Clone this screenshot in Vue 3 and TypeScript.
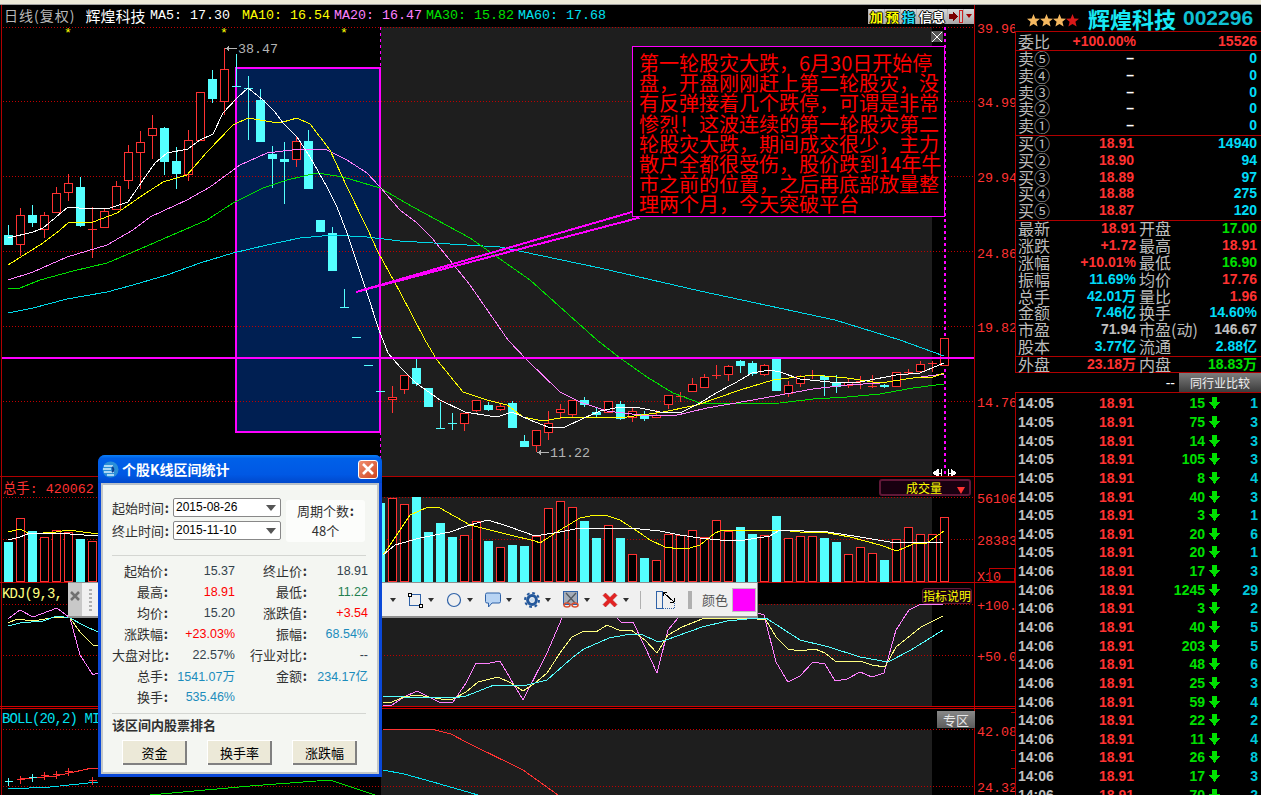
<template>
	<div class="page">
		<div class="top-strip"></div>
		<div class="main">
			<div class="chart">
				<!-- K line pane -->
				<section class="pane pane-k">
					<svg class="plot" viewBox="0 5 1015 471" shape-rendering="crispEdges">
						<rect x="381" y="27" width="551" height="449" fill="#1e1e1e" />
						<rect x="236" y="68" width="144" height="364" fill="#001f52" />
						<line v-for="y in kGrid" :key="y" class="dots" x1="3" x2="974" :y1="y + 0.5" :y2="y + 0.5" />
						<line class="edge" x1="1.5" x2="1.5" y1="5" y2="476" />
						<line class="edge" x1="974.5" x2="974.5" y1="5" y2="476" />
						<rect x="236" y="68" width="144" height="364" fill="none" stroke="#ff00ff" stroke-width="2" />
						<line class="dash-v" x1="380.5" x2="380.5" y1="27" y2="68" />
						<line class="dash-v" x1="380.5" x2="380.5" y1="432" y2="475" />
						<line class="dash-v heavy" x1="945" x2="945" y1="27" y2="475" />
						<g v-for="c in candles" :key="c.x">
							<line :x1="c.x" :x2="c.x" :y1="c.hi" :y2="c.lo" :stroke="c.color" />
							<line v-if="c.flat" :x1="c.x - 4.5" :x2="c.x + 4.5" :y1="c.top + 0.5" :y2="c.top + 0.5" :stroke="c.color" />
							<rect v-else-if="c.up" :x="c.x - 4" :y="c.top + 0.5" width="8" :height="c.bot - c.top" fill="#000" :stroke="c.color" />
							<rect v-else :x="c.x - 4.5" :y="c.top" width="9" :height="c.bot - c.top" :fill="c.color" />
						</g>
						<polyline v-for="l in maLines" :key="l.color" :points="l.points" :stroke="l.color" fill="none" />
						<line x1="2" x2="974" y1="358" y2="358" stroke="#ff00ff" stroke-width="2" />
						<polygon points="356,292 632,212 638,218" fill="none" stroke="#ff00ff" stroke-width="2" />
						<text v-for="x in starXs" :key="x" class="star-mark" :x="x" y="37">*</text>
						<g class="price-flag">
							<line x1="225" x2="237" y1="48.5" y2="48.5" />
							<polygon points="225,48.5 229,46 229,51" />
							<text x="238" y="53">38.47</text>
							<line x1="537" x2="549" y1="452.5" y2="452.5" />
							<polygon points="537,452.5 541,450 541,455" />
							<text x="550" y="457">11.22</text>
						</g>
						<g fill="#fff" stroke="#fff">
							<polygon points="933,473 938,469.5 938,476.5" />
							<line x1="938" x2="941" y1="473" y2="473" />
							<line x1="941.5" x2="941.5" y1="469" y2="477" />
							<polygon points="956,473 951,469.5 951,476.5" />
							<line x1="948" x2="951" y1="473" y2="473" />
							<line x1="948.5" x2="948.5" y1="469" y2="477" />
						</g>
						<text v-for="a in kAxis" :key="a.t" class="axis-text" x="977" :y="a.y + 5">{{ a.t }}</text>
					</svg>
					<header class="pane-head head-k">
						<div class="stock-name">
							<span class="period">日线(复权)</span>
							<span class="name">辉煌科技</span>
						</div>
						<span v-for="m in maLabels" :key="m.t" class="ma-label" :style="{ color: m.color }">{{ m.t }}</span>
						<div class="head-btns">
							<span class="hb yellow">加</span>
							<span class="hb yellow">预</span>
							<span class="hb blue">指</span>
							<span class="hb white wide">信息</span>
							<span class="hb">
								<svg width="14" height="13" viewBox="0 0 14 13" shape-rendering="crispEdges">
									<path d="M0 4h4V1l5 5.5L4 12V9H0z" fill="#7a0000" />
									<rect x="10" y="0.5" width="3" height="12" fill="#c8c8c8" stroke="#d02020" />
								</svg>
							</span>
							<span class="hb narrow"><i class="caret-red"></i></span>
						</div>
					</header>
					<button class="note-close">
						<svg width="10" height="10" viewBox="0 0 10 10"><path d="M0 0l10 10M10 0L0 10" stroke="#fff" stroke-width="1" /></svg>
					</button>
					<div class="note">
						<div v-for="l in noteLines" :key="l">{{ l }}</div>
					</div>
				</section>

				<!-- volume pane -->
				<section class="pane pane-vol">
					<svg class="plot" viewBox="0 476 1015 107" shape-rendering="crispEdges">
						<rect x="381" y="497" width="551" height="86" fill="#1e1e1e" />
						<line v-for="y in [497, 539]" :key="y" class="dots" x1="3" x2="974" :y1="y + 0.5" :y2="y + 0.5" />
						<line class="edge" x1="1.5" x2="1.5" y1="476" y2="583" />
						<line class="edge" x1="974.5" x2="974.5" y1="476" y2="583" />
						<line class="edge" x1="0" x2="1015" y1="476" y2="476" />
						<g v-for="b in volBars" :key="b.x">
							<rect v-if="b.up" :x="b.x - 4" :y="b.top + 0.5" width="8" :height="581 - b.top" fill="#000" stroke="#ff3232" />
							<rect v-else :x="b.x - 4.5" :y="b.top" width="9" :height="582 - b.top" fill="#54ffff" />
						</g>
						<polyline :points="volYellow" fill="none" stroke="#ffff00" />
						<polyline :points="volWhite" fill="none" stroke="#fff" />
						<polyline :points="volYellowL" fill="none" stroke="#ffff00" />
						<polyline :points="volWhiteL" fill="none" stroke="#fff" />
						<line x1="0" x2="1015" y1="582.5" y2="582.5" stroke="#c00000" stroke-width="1" />
						<text class="axis-text" x="977" y="503">56106</text>
						<text class="axis-text" x="977" y="545">28383</text>
						<text class="axis-text" x="977" y="581">X10</text>
						<rect x="989.5" y="568.5" width="25" height="13" fill="none" stroke="#c00000" />
					</svg>
					<header class="pane-head head-vol">
						<span class="vol-label">总手: 420062</span>
						<div class="pick">成交量<i class="caret-red big"></i></div>
					</header>
				</section>

				<!-- KDJ pane -->
				<section class="pane pane-kdj">
					<svg class="plot" viewBox="0 583 1015 125" shape-rendering="crispEdges">
						<rect x="381" y="604" width="551" height="103" fill="#1e1e1e" />
						<line v-for="y in [604, 655]" :key="y" class="dots" x1="3" x2="974" :y1="y + 0.5" :y2="y + 0.5" />
						<line class="edge" x1="1.5" x2="1.5" y1="583" y2="708" />
						<line class="edge" x1="974.5" x2="974.5" y1="583" y2="708" />
						<polyline v-for="l in kdjLines" :key="l.key" :points="l.points" :stroke="l.color" fill="none" />
						<line x1="0" x2="1015" y1="706.5" y2="706.5" stroke="#d00000" />
						<text class="axis-text" x="977" y="610">+100.</text>
						<text class="axis-text" x="977" y="661">+50.0</text>
					</svg>
					<header class="pane-head head-kdj">
						<span class="kdj-label">KDJ(9,3,</span>
						<div class="pick small">指标说明</div>
					</header>
				</section>

				<!-- BOLL pane -->
				<section class="pane pane-boll">
					<svg class="plot" viewBox="0 708 1015 87" shape-rendering="crispEdges">
						<rect x="381" y="730" width="551" height="65" fill="#1e1e1e" />
						<line v-for="y in [729, 786]" :key="y" class="dots" x1="3" x2="974" :y1="y + 0.5" :y2="y + 0.5" />
						<line class="edge" x1="1.5" x2="1.5" y1="708" y2="795" />
						<line class="edge" x1="974.5" x2="974.5" y1="708" y2="795" />
						<line x1="0" x2="1015" y1="708.5" y2="708.5" stroke="#d00000" />
						<polyline v-for="l in bollLines" :key="l.key" :points="l.points" :stroke="l.color" fill="none" />
						<g v-for="c in bollCrosses" :key="c.x" :stroke="c.color">
							<line :x1="c.x" :x2="c.x" :y1="c.y - 3" :y2="c.y + 5" />
							<line :x1="c.x - 4" :x2="c.x + 4" :y1="c.y" :y2="c.y" />
						</g>
						<text class="axis-text" x="977" y="736">42.08</text>
						<text class="axis-text" x="977" y="792">24.32</text>
						<line v-for="y in sideTicks" :key="y" x1="1011" x2="1015" :y1="y" :y2="y" stroke="#c00000" />
					</svg>
					<header class="pane-head head-boll">
						<span class="boll-label">BOLL(20,2) MI</span>
						<div class="zone-btn">专区</div>
					</header>
				</section>
			</div>

			<aside class="side">
				<div class="side-title">
					<div class="stars">
						<svg v-for="(s, i) in stars" :key="i" width="13" height="13" viewBox="0 0 13 13">
							<polygon points="6.5,0 8.3,4.4 13,4.8 9.4,7.8 10.6,12.6 6.5,10 2.4,12.6 3.6,7.8 0,4.8 4.7,4.4" :fill="s" />
						</svg>
					</div>
					<span class="title-name">辉煌科技</span>
					<span class="title-code">002296</span>
				</div>
				<div class="box">
					<div class="ratio-row">
						<span class="lb">委比</span>
						<span class="v red">+100.00%</span>
						<span class="v red">15526</span>
					</div>
					<div class="quote-block">
						<div v-for="q in sells" :key="q.l" class="quote-row">
							<span class="lb">{{ q.l }}</span>
							<span class="v dash price">–</span>
							<span class="v blue">0</span>
						</div>
					</div>
					<div class="quote-block">
						<div v-for="q in buys" :key="q.l" class="quote-row">
							<span class="lb">{{ q.l }}</span>
							<span class="v red price">{{ q.p }}</span>
							<span class="v blue">{{ q.n }}</span>
						</div>
					</div>
					<div class="stat-block">
						<div v-for="s in statRows" :key="s.a" class="stat-row">
							<span class="lb">{{ s.a }}</span>
							<span class="v" :class="s.ac">{{ s.av }}</span>
							<span class="lb second">{{ s.b }}</span>
							<span class="v" :class="s.bc">{{ s.bv }}</span>
						</div>
					</div>
					<div class="stat-row outer-row">
						<span class="lb">外盘</span>
						<span class="v red">23.18万</span>
						<span class="lb second">内盘</span>
						<span class="v green">18.83万</span>
					</div>
				</div>
				<div class="compare-row">
					<span class="dashes">--</span>
					<div class="compare-btn">同行业比较</div>
				</div>
				<div class="ticks">
					<div v-for="(t, i) in ticks" :key="i" class="tick-row">
						<span class="tick-time">{{ t.time }}</span>
						<span class="v red">18.91</span>
						<span class="v green">{{ t.vol }}</span>
						<svg class="tick-arrow" width="11" height="12" viewBox="0 0 11 12" shape-rendering="crispEdges">
							<polygon points="3,0 8,0 8,5 11,5 5.5,12 0,5 3,5" fill="#00e000" />
						</svg>
						<span class="v tick-last">{{ t.last }}</span>
					</div>
				</div>
			</aside>
		</div>

		<!-- floating drawing toolbar, partly behind the dialog -->
		<div class="toolbar">
			<div class="tb-close">
				<svg width="10" height="10" viewBox="0 0 10 10"><path d="M1 1l8 8M9 1L1 9" stroke="#707070" stroke-width="2.5" /></svg>
			</div>
			<div class="tb-grip"></div>
			<div class="tb-hidden"></div>
			<i class="tb-caret first"></i>
			<div class="tool">
				<svg width="16" height="16" viewBox="0 0 16 16" shape-rendering="crispEdges">
					<rect x="2.5" y="2.5" width="11" height="11" fill="none" stroke="#2f62a8" />
					<rect x="1" y="1" width="3" height="3" fill="#fff" stroke="#000" />
					<rect x="12" y="12" width="3" height="3" fill="#fff" stroke="#000" />
				</svg>
				<i class="tb-caret"></i>
			</div>
			<div class="tool">
				<svg width="16" height="16" viewBox="0 0 16 16">
					<circle cx="8" cy="8" r="6.5" fill="none" stroke="#2f62a8" stroke-width="1.2" />
				</svg>
				<i class="tb-caret"></i>
			</div>
			<div class="tool">
				<svg width="16" height="16" viewBox="0 0 16 16">
					<path d="M2 1h12a1.5 1.5 0 0 1 1.5 1.5v7A1.5 1.5 0 0 1 14 11H7l-3.5 4V11H2A1.5 1.5 0 0 1 .5 9.5v-7A1.5 1.5 0 0 1 2 1z" fill="#b8d4f4" stroke="#2f62a8" />
				</svg>
				<i class="tb-caret"></i>
			</div>
			<div class="tool">
				<svg width="16" height="16" viewBox="0 0 16 16">
					<circle cx="8" cy="8" r="7" fill="none" stroke="#24589c" stroke-width="2" stroke-dasharray="2.8 2.7" />
					<circle cx="8" cy="8" r="4.4" fill="none" stroke="#24589c" stroke-width="3" />
					<circle cx="8" cy="8" r="2" fill="#c8dcf0" />
				</svg>
				<i class="tb-caret"></i>
			</div>
			<div class="tool">
				<svg width="16" height="17" viewBox="0 0 16 17">
					<rect x="0.5" y="0.5" width="14" height="13" fill="#a4acb8" stroke="#2f62a8" />
					<path d="M3 2l9 10M13 2L4 12" stroke="#505860" stroke-width="1.2" />
					<ellipse cx="4" cy="14" rx="3" ry="2" fill="none" stroke="#d85030" stroke-width="1.6" />
					<ellipse cx="12" cy="14" rx="3" ry="2" fill="none" stroke="#d85030" stroke-width="1.6" />
				</svg>
				<i class="tb-caret"></i>
			</div>
			<div class="tool last">
				<svg width="16" height="16" viewBox="0 0 16 16">
					<path d="M1 3.5L3.5 1 8 5.5 12.5 1 15 3.5 10.5 8 15 12.5 12.5 15 8 10.5 3.5 15 1 12.5 5.5 8z" fill="#e42222" stroke="#b01818" stroke-width="0.5" />
				</svg>
				<i class="tb-caret"></i>
			</div>
			<div class="tb-sep"></div>
			<svg class="tb-ruler" width="19" height="18" viewBox="0 0 19 18" shape-rendering="crispEdges">
				<rect x="0.5" y="0.5" width="6" height="17" fill="none" stroke="#2f62a8" />
				<line x1="7" x2="19" y1="17.5" y2="17.5" stroke="#2f62a8" stroke-dasharray="1 1" />
				<line x1="18.5" x2="18.5" y1="12" y2="17" stroke="#2f62a8" stroke-dasharray="1 1" />
				<path d="M7 1l11 10" stroke="#000" stroke-width="1" />
				<path d="M7 1h4M7 1v4M18 11h-4M18 11v-4" stroke="#000" stroke-width="1" />
			</svg>
			<div class="tb-sep second"></div>
			<span class="tb-color-label">颜色</span>
			<div class="tb-swatch"></div>
		</div>

		<!-- interval statistics dialog -->
		<div class="dialog">
			<div class="dialog-title">
				<svg width="17" height="17" viewBox="0 0 17 17">
					<circle cx="8.5" cy="8.5" r="8" fill="#2b8fd8" />
					<path d="M2 5h9M1 8h8M2 11h10M5 14h7" stroke="#d8f0ff" stroke-width="1.5" />
					<path d="M10 6a3 3 0 0 1 0 5" stroke="#0a3c90" stroke-width="2" fill="none" />
				</svg>
				<span class="dialog-name">个股K线区间统计</span>
				<button class="dialog-close">
					<svg width="12" height="12" viewBox="0 0 12 12"><path d="M1 1l10 10M11 1L1 11" stroke="#fff" stroke-width="2.6" /></svg>
				</button>
			</div>
			<div class="dialog-body">
				<div class="range">
					<div class="range-fields">
						<div class="range-row">
							<span class="range-label">起始时间<b class="colon">:</b></span>
							<div class="combo">2015-08-26<i class="combo-caret"></i></div>
						</div>
						<div class="range-row">
							<span class="range-label">终止时间<b class="colon">:</b></span>
							<div class="combo">2015-11-10<i class="combo-caret"></i></div>
						</div>
					</div>
					<div class="period-card">
						<span>周期个数<b class="colon">:</b></span>
						<span>48个</span>
					</div>
				</div>
				<div class="rule"></div>
				<div class="stats">
					<template v-for="s in dialogStats" :key="s.l">
						<span class="stat-label">{{ s.l }}<b class="colon">:</b></span>
						<span class="stat-val" :class="s.c">{{ s.v }}</span>
					</template>
				</div>
				<div class="rule lower"></div>
				<div class="rank-title">该区间内股票排名</div>
				<div class="rank-btns">
					<button class="rank-btn">资金</button>
					<button class="rank-btn">换手率</button>
					<button class="rank-btn">涨跌幅</button>
				</div>
			</div>
		</div>
	</div>
</template>

<script setup lang="ts">
type Pt = number[];

const pts = (a: Pt[]) => a.map((p) => p.join(",")).join(" ");

const RED = "#ff3232";
const CYAN = "#54ffff";

const kGrid = [27, 101, 176, 251, 326, 401];
const kAxis = [
	{ t: "39.96", y: 28 },
	{ t: "34.99", y: 102 },
	{ t: "29.94", y: 177 },
	{ t: "24.86", y: 253 },
	{ t: "19.82", y: 327 },
	{ t: "14.76", y: 402 },
];
const starXs = [64, 220, 340];

const maLabels = [
	{ t: "MA5: 17.30", color: "#fff" },
	{ t: "MA10: 16.54", color: "#ffff00" },
	{ t: "MA20: 16.47", color: "#ff80ff" },
	{ t: "MA30: 15.82", color: "#00e000" },
	{ t: "MA60: 17.68", color: "#00e0f0" },
];

// [body top, body bottom, high, low, up?] in page pixels, one per day
const rawCandles: [number, number, number, number, number][] = [
	[235, 245, 225, 245, 0], [215, 244, 208, 256, 1], [215, 223, 205, 227, 0], [215, 229, 212, 238, 1],
	[193, 212, 187, 212, 1], [183, 192, 174, 201, 1], [187, 226, 177, 227, 0], [229, 229, 207, 258, 1],
	[211, 227, 208, 228, 1], [186, 209, 181, 209, 1], [152, 180, 145, 189, 1], [142, 152, 131, 189, 1],
	[128, 135, 115, 159, 1], [128, 162, 127, 175, 0], [161, 174, 147, 189, 0], [140, 174, 130, 181, 1],
	[92, 140, 92, 140, 1], [79, 99, 70, 103, 0], [69, 101, 48, 115, 1], [86, 86, 54, 87, 0],
	[88, 88, 76, 140, 0], [100, 142, 89, 142, 0], [154, 159, 146, 188, 0], [159, 162, 142, 204, 0],
	[141, 159, 137, 167, 1], [141, 189, 130, 189, 0], [220, 232, 220, 232, 0], [233, 271, 227, 271, 0],
	[307, 307, 289, 307, 0], [337, 337, 337, 337, 0], [365, 365, 365, 365, 0], [391, 391, 391, 391, 0],
	[397, 399, 386, 413, 1], [375, 389, 375, 394, 1], [368, 384, 359, 386, 0], [388, 407, 388, 407, 0],
	[428, 428, 402, 428, 0], [423, 423, 413, 430, 0], [413, 423, 413, 431, 1], [400, 410, 400, 412, 1],
	[405, 410, 402, 411, 0], [406, 409, 404, 411, 1], [403, 428, 401, 428, 0], [441, 447, 435, 447, 0],
	[430, 445, 430, 452, 1], [423, 432, 411, 440, 1], [409, 412, 404, 419, 1], [400, 414, 400, 417, 1],
	[400, 405, 397, 407, 0], [412, 415, 408, 417, 0], [401, 412, 401, 412, 1], [404, 419, 401, 420, 0],
	[411, 417, 408, 422, 1], [414, 419, 411, 421, 0], [415, 417, 410, 417, 1], [395, 404, 395, 409, 1],
	[396, 396, 392, 402, 1], [384, 391, 378, 392, 1], [377, 387, 374, 387, 1], [375, 375, 365, 379, 1],
	[366, 374, 365, 381, 1], [361, 366, 360, 373, 0], [363, 374, 361, 376, 0], [365, 374, 364, 376, 1],
	[358, 391, 357, 391, 0], [385, 393, 381, 397, 1], [376, 383, 375, 387, 1], [375, 375, 370, 379, 1],
	[376, 380, 375, 396, 0], [383, 387, 375, 393, 0], [382, 385, 379, 388, 1], [381, 381, 376, 389, 1],
	[386, 386, 375, 388, 1], [385, 387, 384, 388, 0], [372, 386, 372, 386, 1], [372, 372, 369, 375, 1],
	[364, 371, 361, 371, 1], [363, 363, 361, 372, 1], [338, 365, 338, 365, 1],
];

const candles = rawCandles.map(([top, bot, hi, lo, up], i) => ({
	x: 8.5 + 12 * i,
	top,
	bot,
	hi,
	lo,
	up: up === 1,
	flat: bot - top < 1,
	color: up ? RED : CYAN,
}));

const maLines = [
	{
		color: "#00d8e8",
		points: pts([[8, 313], [33, 308], [67, 299], [107, 292], [133, 285], [167, 275], [200, 263], [233, 253], [267, 245], [300, 238], [333, 235], [367, 237], [400, 241], [500, 247], [600, 268], [700, 291], [835, 320], [900, 340], [944, 356]]),
	},
	{
		color: "#00e000",
		points: pts([[8, 289], [20, 288], [40, 280], [73, 271], [107, 263], [133, 252], [163, 239], [207, 220], [233, 203], [263, 188], [287, 180], [317, 173], [343, 177], [380, 188], [413, 207], [470, 238], [530, 280], [597, 340], [620, 358], [647, 377], [673, 393], [700, 403], [733, 404], [780, 403], [813, 399], [847, 397], [880, 394], [913, 388], [944, 384]]),
	},
	{
		color: "#ff80ff",
		points: pts([[8, 280], [33, 272], [67, 257], [107, 245], [133, 230], [150, 217], [187, 200], [210, 187], [240, 165], [267, 153], [300, 149], [327, 150], [347, 160], [367, 173], [380, 187], [400, 210], [417, 223], [432, 238], [470, 285], [508, 340], [527, 360], [560, 392], [580, 402], [607, 411], [640, 415], [673, 416], [707, 408], [753, 400], [780, 395], [813, 389], [847, 385], [880, 383], [913, 378], [944, 374]]),
	},
	{
		color: "#ffff00",
		points: pts([[8, 265], [43, 243], [60, 230], [68, 223], [93, 222], [117, 213], [140, 197], [163, 182], [187, 175], [207, 152], [233, 125], [248, 118], [272, 122], [283, 122], [297, 118], [310, 124], [330, 150], [347, 187], [368, 230], [378, 252], [400, 292], [425, 340], [437, 360], [463, 392], [487, 400], [507, 405], [523, 417], [543, 421], [560, 418], [580, 417], [607, 417], [627, 417], [663, 412], [697, 405], [740, 390], [773, 380], [813, 375], [847, 378], [880, 383], [913, 378], [933, 377], [944, 373]]),
	},
	{
		color: "#fff",
		points: pts([[8, 238], [33, 232], [43, 228], [68, 207], [90, 209], [110, 208], [128, 202], [143, 180], [155, 163], [167, 153], [188, 149], [200, 140], [213, 134], [223, 113], [237, 98], [248, 88], [263, 100], [275, 112], [283, 123], [297, 137], [310, 157], [327, 187], [337, 207], [347, 233], [367, 293], [379, 330], [388, 353], [400, 367], [416, 383], [440, 400], [465, 412], [490, 416], [500, 416], [512, 412], [530, 420], [548, 427], [565, 427], [584, 418], [600, 411], [620, 407], [640, 408], [660, 412], [680, 413], [700, 403], [716, 393], [735, 383], [752, 373], [770, 370], [780, 372], [800, 379], [830, 382], [860, 382], [896, 375], [920, 373], [932, 368], [944, 363]]),
	},
];

const noteLines = [
	"第一轮股灾大跌\uff0c6月30日开始停",
	"盘\uff0c开盘刚刚赶上第二轮股灾\uff0c没",
	"有反弹接着几个跌停\uff0c可谓是非常",
	"惨烈\uff01这波连续的第一轮股灾第二",
	"轮股灾大跌\uff0c期间成交很少\uff0c主力",
	"散户全都很受伤\uff0c股价跌到14年牛",
	"市之前的位置\uff0c之后再底部放量整",
	"理两个月\uff0c今天突破平台",
];

// volume bar tops, negative means a falling (cyan) day
const volLeft = [-542, 518, -531, 537, 530, 532, -539, 541];
const volRight = [
	-503, 498, 504, -497, -532, -523, -537, 535, 521, -541, 547, -545, -546, 536, 508, 501, 507, -521, -538, 525,
	-538, 554, -558, 560, 534, 535, 530, 537, 520, 531, -527, -534, 535, -516, 538, 536, 536, -538, -542, 554, 547,
	553, -560, 539, 527, 534, 534, 517,
];
const toBar = (v: number, i: number) => ({ x: 8.5 + 12 * i, top: Math.abs(v), up: v > 0 });
const volBars = [...volLeft.map((v, i) => toBar(v, i)), ...volRight.map((v, i) => toBar(v, i + 31))];

const volYellow = pts([[383, 555], [390, 545], [410, 515], [428, 507], [440, 508], [470, 525], [490, 530], [510, 535], [535, 541], [540, 543], [560, 530], [580, 518], [595, 515], [605, 515], [620, 520], [640, 533], [650, 540], [665, 547], [680, 549], [690, 548], [700, 545], [715, 533], [720, 531], [735, 530], [760, 530], [780, 530], [800, 532], [828, 533], [850, 537], [880, 545], [897, 551], [913, 544], [927, 543], [944, 531]]);
const volWhite = pts([[383, 555], [395, 545], [420, 538], [450, 532], [470, 525], [488, 520], [510, 527], [535, 536], [560, 532], [580, 528], [600, 528], [620, 528], [640, 529], [660, 531], [680, 535], [700, 538], [720, 540], [745, 540], [770, 536], [780, 530], [828, 532], [860, 537], [890, 542], [910, 543], [944, 542]]);
const volYellowL = pts([[8, 532], [20, 529], [30, 534], [56, 532], [68, 530], [98, 534]]);
const volWhiteL = pts([[8, 540], [20, 537], [30, 533], [56, 533], [98, 536]]);

// KDJ read off a crop: x = 380 + z / 2.45, y = 590 + v / 3
const kz = (a: Pt[]) => pts(a.map(([z, v]) => [Math.round(380 + z / 2.45), Math.round(590 + v / 3)]));
const kdjLines = [
	{ key: "jl", color: "#ff80ff", points: pts([[8, 619], [20, 610], [33, 617], [57, 608], [70, 618], [80, 655], [93, 675], [100, 672]]) },
	{ key: "kl", color: "#ffff80", points: pts([[8, 623], [17, 619], [33, 621], [57, 617], [70, 618], [80, 632], [93, 645], [100, 645]]) },
	{ key: "dl", color: "#54ffff", points: pts([[8, 626], [20, 623], [43, 621], [57, 616], [70, 618], [83, 625], [100, 633]]) },
	{ key: "jr", color: "#ff80ff", points: kz([[8, 345], [30, 345], [60, 320], [90, 304], [120, 322], [150, 340], [180, 335], [210, 280], [235, 220], [270, 220], [295, 214], [350, 330], [410, 190], [445, 85], [500, 60], [580, 85], [590, 97], [620, 97], [650, 170], [678, 250], [705, 120], [730, 85], [800, 60], [900, 60], [940, 75], [970, 215], [1000, 277], [1030, 258], [1060, 217], [1090, 222], [1115, 273], [1145, 266], [1175, 245], [1205, 262], [1235, 250], [1265, 120], [1295, 60], [1325, 43], [1380, 43]]) },
	{ key: "kr", color: "#ffff80", points: kz([[8, 338], [30, 335], [60, 322], [90, 316], [120, 320], [150, 328], [180, 328], [210, 305], [240, 275], [290, 260], [320, 280], [350, 303], [380, 280], [410, 250], [440, 190], [470, 140], [500, 123], [530, 125], [557, 105], [590, 122], [615, 120], [650, 150], [678, 188], [705, 135], [740, 110], [790, 88], [830, 85], [900, 85], [945, 90], [970, 140], [1000, 178], [1030, 183], [1065, 178], [1090, 190], [1115, 214], [1175, 214], [1205, 225], [1238, 230], [1265, 170], [1325, 110], [1380, 78]]) },
	{ key: "dr", color: "#54ffff", points: kz([[8, 318], [60, 322], [120, 322], [180, 325], [210, 318], [280, 285], [350, 288], [410, 270], [470, 205], [500, 178], [560, 143], [600, 135], [640, 133], [680, 155], [700, 150], [790, 110], [850, 92], [900, 87], [945, 85], [1030, 150], [1100, 170], [1175, 200], [1245, 215], [1300, 180], [1380, 120]]) },
];

const bollLines = [
	{ key: "up", color: RED, points: pts([[383, 729], [431, 729], [451, 734], [466, 742], [523, 770], [558, 795]]) },
	{ key: "mid", color: "#00e0f0", points: pts([[383, 770], [404, 774], [433, 782], [478, 795]]) },
	{ key: "midl", color: "#00e0f0", points: pts([[8, 789], [50, 787], [98, 782]]) },
	{ key: "low", color: "#00e000", points: pts([[150, 795], [250, 786], [330, 780], [375, 795]]) },
	{ key: "upl", color: RED, points: pts([[20, 779], [56, 776], [92, 768], [98, 768]]) },
];
const bollCrosses = [
	{ x: 8.5, y: 781, color: CYAN },
	{ x: 20.5, y: 779, color: RED },
	{ x: 32.5, y: 777, color: CYAN },
	{ x: 44.5, y: 775, color: RED },
	{ x: 56.5, y: 774, color: RED },
	{ x: 68.5, y: 771, color: RED },
	{ x: 92.5, y: 780, color: RED },
];
const sideTicks = [712, 731, 750, 768, 787];

const stars = ["#f4b860", "#f4b860", "#f4b860", "#d81818"];
const sells = [{ l: "卖⑤" }, { l: "卖④" }, { l: "卖③" }, { l: "卖②" }, { l: "卖①" }];
const buys = [
	{ l: "买①", p: "18.91", n: "14940" },
	{ l: "买②", p: "18.90", n: "94" },
	{ l: "买③", p: "18.89", n: "97" },
	{ l: "买④", p: "18.88", n: "275" },
	{ l: "买⑤", p: "18.87", n: "120" },
];
const statRows = [
	{ a: "最新", av: "18.91", ac: "red", b: "开盘", bv: "17.00", bc: "green" },
	{ a: "涨跌", av: "+1.72", ac: "red", b: "最高", bv: "18.91", bc: "red" },
	{ a: "涨幅", av: "+10.01%", ac: "red", b: "最低", bv: "16.90", bc: "green" },
	{ a: "振幅", av: "11.69%", ac: "blue", b: "均价", bv: "17.76", bc: "red" },
	{ a: "总手", av: "42.01万", ac: "blue", b: "量比", bv: "1.96", bc: "red" },
	{ a: "金额", av: "7.46亿", ac: "blue", b: "换手", bv: "14.60%", bc: "blue" },
	{ a: "市盈", av: "71.94", ac: "gray", b: "市盈(动)", bv: "146.67", bc: "gray" },
	{ a: "股本", av: "3.77亿", ac: "blue", b: "流通", bv: "2.88亿", bc: "blue" },
];

const tickData: [number, number][] = [
	[15, 1], [75, 3], [14, 3], [105, 3], [8, 4], [40, 3], [3, 1], [20, 6], [20, 1],
	[17, 3], [1245, 29], [3, 2], [40, 5], [203, 5], [48, 6], [25, 3], [59, 4], [22, 2], [11, 4], [26, 8], [17, 3], [70, 2],
];
const ticks = tickData.map(([vol, last], i) => ({ time: i < 9 ? "14:05" : "14:06", vol, last }));

const dialogStats = [
	{ l: "起始价", v: "15.37", c: "dark" },
	{ l: "终止价", v: "18.91", c: "dark" },
	{ l: "最高", v: "18.91", c: "up" },
	{ l: "最低", v: "11.22", c: "down" },
	{ l: "均价", v: "15.20", c: "dark" },
	{ l: "涨跌值", v: "+3.54", c: "up" },
	{ l: "涨跌幅", v: "+23.03%", c: "up" },
	{ l: "振幅", v: "68.54%", c: "teal" },
	{ l: "大盘对比", v: "22.57%", c: "dark" },
	{ l: "行业对比", v: "--", c: "dark" },
	{ l: "总手", v: "1541.07万", c: "teal" },
	{ l: "金额", v: "234.17亿", c: "teal" },
	{ l: "换手", v: "535.46%", c: "teal" },
];
</script>

<style scoped>
.page {
	position: relative;
	width: 1261px;
	height: 795px;
	overflow: hidden;
	background: #000;
	font-family: "Liberation Sans", "Noto Sans CJK SC", sans-serif;
}

.top-strip {
	height: 5px;
	box-sizing: border-box;
	background: #ece9d8;
	border-bottom: 1px solid #a0a0a0;
}

.main {
	display: flex;
	height: 790px;
}

.chart {
	width: 1015px;
	display: flex;
	flex-direction: column;
	flex-shrink: 0;
}

.pane {
	position: relative;
	overflow: hidden;
}

.pane-k {
	height: 471px;
}
.pane-vol {
	height: 107px;
}
.pane-kdj {
	height: 125px;
}
.pane-boll {
	height: 87px;
}

.plot {
	position: absolute;
	inset: 0;
	width: 100%;
	height: 100%;
}

.dots {
	stroke: #c00000;
	stroke-dasharray: 1 2;
}

.edge {
	stroke: #b00000;
}

.dash-v {
	stroke: #ff00ff;
	stroke-dasharray: 3 3;
}

.dash-v.heavy {
	stroke-width: 2;
}

.axis-text {
	font: 13.33px "Liberation Mono", monospace;
	fill: #ff3232;
}

.star-mark {
	font: 13.33px "Liberation Mono", monospace;
	fill: #ffff00;
}

.price-flag {
	fill: #b4b4b4;
	stroke: none;
}

.price-flag line {
	stroke: #b4b4b4;
}

.price-flag text {
	font: 13.33px "Liberation Mono", monospace;
}

.pane-head {
	position: relative;
	display: flex;
	align-items: center;
	white-space: nowrap;
	font: 13.33px "Liberation Mono", "Noto Sans CJK SC", monospace;
}

.head-k {
	height: 20px;
	padding: 0 41px 0 4px;
}

.stock-name {
	width: 146px;
	display: flex;
	align-items: center;
	font-family: "Noto Sans CJK SC", sans-serif;
}

.period {
	font-size: 14px;
	letter-spacing: 1px;
	color: #b8b8b8;
}

.name {
	margin-left: 10px;
	font-size: 15px;
	color: #fff;
}

.ma-label {
	width: 92px;
}

.head-btns {
	display: flex;
	margin-left: auto;
	height: 15px;
	margin-top: 2px;
	background: #b4b4b4;
	font: bold 13px/15px "Noto Sans CJK SC", sans-serif;
}

.hb {
	width: 15px;
	margin-left: 1px;
	display: flex;
	align-items: center;
	justify-content: center;
	background: linear-gradient(#d8d8d8, #a8a8a8);
	text-shadow:
		1px 0 #000,
		-1px 0 #000,
		0 1px #000,
		0 -1px #000;
}

.hb.wide {
	width: 30px;
}

.hb.narrow {
	width: 10px;
}

.hb.yellow {
	color: #ffff00;
}

.hb.blue {
	color: #20e0ff;
}

.hb.white {
	color: #fff;
}

.caret-red {
	width: 0;
	height: 0;
	border-left: 3px solid transparent;
	border-right: 3px solid transparent;
	border-top: 4px solid #a00000;
}

.caret-red.big {
	position: absolute;
	right: 4px;
	top: 6px;
	border-left-width: 4px;
	border-right-width: 4px;
	border-top: 7px solid #ff3232;
}

.note-close {
	position: absolute;
	left: 931px;
	top: 26px;
	width: 12px;
	height: 11px;
	padding: 0;
	border: none;
	background: #555;
	display: flex;
	align-items: center;
	justify-content: center;
}

.note {
	position: absolute;
	left: 632px;
	top: 41px;
	width: 313px;
	height: 171px;
	box-sizing: border-box;
	padding: 6px 0 0 6px;
	background: #000;
	border: 1px solid #ff00ff;
	color: #ff0000;
	font: 20px/20.2px "Noto Sans CJK SC", sans-serif;
	white-space: pre;
}

.head-vol {
	height: 22px;
	justify-content: space-between;
	padding: 0 44px 0 3px;
}

.vol-label {
	color: #ff3232;
}

.pick {
	position: relative;
	box-sizing: border-box;
	width: 92px;
	height: 17px;
	padding-right: 2px;
	display: flex;
	align-items: center;
	justify-content: center;
	background: #180010;
	border: 2px solid #601838;
	border-radius: 3px;
	color: #ffff00;
	font: 12px "Noto Sans CJK SC", sans-serif;
}

.pick.small {
	width: 50px;
	height: 16px;
	padding: 0;
	border-width: 1px;
	font-size: 12px;
	margin-top: 3px;
}

.head-kdj {
	height: 22px;
	justify-content: space-between;
	padding: 0 43px 0 2px;
}

.kdj-label {
	color: #ffff80;
	font-size: 14px;
	letter-spacing: -0.9px;
}

.head-boll {
	height: 22px;
	justify-content: space-between;
	padding: 0 40px 0 2px;
}

.boll-label {
	color: #00e0f0;
	font-size: 14px;
	letter-spacing: -0.9px;
}

.zone-btn {
	width: 38px;
	height: 17px;
	display: flex;
	align-items: center;
	justify-content: center;
	background: linear-gradient(#888, #5c5c5c);
	color: #e8e8e8;
	font: 13px "Noto Sans CJK SC", sans-serif;
}

.side {
	flex: 1;
	min-width: 0;
	overflow: hidden;
	font: bold 14px/14px "Liberation Sans", "Noto Sans CJK SC", sans-serif;
}

.side-title {
	height: 26px;
	display: flex;
	align-items: center;
	padding-left: 12px;
}

.stars {
	display: flex;
	width: 61px;
	margin-top: 4px;
}

.title-name {
	color: #18e8f4;
	font: bold 22px "Noto Sans CJK SC", sans-serif;
}

.title-code {
	margin-left: 7px;
	color: #10c0d4;
	font: bold 21px "Liberation Sans", sans-serif;
}

.box {
	border-left: 1px solid #b00000;
	border-top: 1px solid #b00000;
	border-bottom: 1px solid #b00000;
}

.lb {
	color: #bcbcbc;
	font: 16px/15px "Noto Sans CJK SC", sans-serif;
	white-space: nowrap;
}

.v {
	text-align: right;
	white-space: nowrap;
}

.price {
	padding-right: 2px;
}

.red {
	color: #ff3232;
}

.green {
	color: #00e000;
}

.blue {
	color: #00dcf8;
}

.gray {
	color: #c0c0c0;
}

.dash {
	color: #fff;
}

.ratio-row,
.quote-row {
	display: grid;
	grid-template-columns: 34px 84px 1fr;
	padding: 0 4px 0 2px;
}

.ratio-row {
	height: 18px;
	align-items: center;
	border-bottom: 1px solid #b00000;
}

.quote-block {
	height: 85px;
	box-sizing: border-box;
	border-bottom: 1px solid #b00000;
	display: grid;
	grid-auto-rows: 16.8px;
}

.stat-block {
	height: 136px;
	box-sizing: border-box;
	border-bottom: 1px solid #b00000;
	display: grid;
	grid-auto-rows: 16.9px;
}

.stat-row {
	display: grid;
	grid-template-columns: 34px 84px 62px 1fr;
	padding: 0 4px 0 2px;
}

.second {
	padding-left: 3px;
}

.outer-row {
	height: 15px;
}

.compare-row {
	height: 19px;
	display: flex;
	align-items: center;
	justify-content: flex-end;
	border-bottom: 1px solid #b00000;
}

.dashes {
	margin-right: 4px;
	color: #fff;
	font-weight: 400;
}

.compare-btn {
	width: 82px;
	height: 19px;
	display: flex;
	align-items: center;
	justify-content: center;
	background: linear-gradient(#7c7c7c, #3c3c3c);
	color: #f0f0f0;
	font: 12px "Noto Sans CJK SC", sans-serif;
}

.ticks {
	display: grid;
	grid-auto-rows: 18.65px;
	padding-top: 1px;
	border-left: 1px solid #b00000;
}

.tick-row {
	display: grid;
	grid-template-columns: 38px 78px 71px 18px 1fr;
	align-items: center;
	padding: 0 3px 0 2px;
}

.tick-time {
	color: #c0c0c0;
}

.tick-arrow {
	margin-left: 4px;
}

.tick-last {
	color: #00c8dc;
}

.toolbar {
	position: absolute;
	left: 68px;
	top: 582px;
	width: 690px;
	height: 36px;
	box-sizing: border-box;
	display: flex;
	align-items: center;
	background: #f0f0f0;
	border-top: 1px solid #909090;
	border-bottom: 2px solid #909090;
	border-right: 1px solid #909090;
}

.tb-close {
	width: 14px;
	height: 100%;
	display: flex;
	align-items: flex-start;
	justify-content: center;
	padding-top: 8px;
	box-sizing: border-box;
	background: #c8c8c8;
}

.tb-grip {
	width: 16px;
	height: 100%;
	background: repeating-linear-gradient(#b0b0b0 0 2px, transparent 2px 4px) center / 3px 22px no-repeat;
}

.tb-hidden {
	width: 292px;
}

.tb-caret {
	width: 0;
	height: 0;
	margin-left: 5px;
	border-left: 3.5px solid transparent;
	border-right: 3.5px solid transparent;
	border-top: 4px solid #303030;
}

.tb-caret.first {
	margin: 0 11px 0 0;
}

.tool {
	width: 39px;
	display: flex;
	align-items: center;
	flex-shrink: 0;
}

.tool.last {
	width: 33px;
}

.tb-sep {
	width: 1px;
	height: 18px;
	margin-left: 5px;
	background: #b0b0b0;
}

.tb-sep.second {
	margin-left: 13px;
}

.tb-ruler {
	margin-left: 15px;
}

.tb-color-label {
	margin-left: 10px;
	width: 26px;
	color: #555;
	font: 13px "Noto Sans CJK SC", sans-serif;
}

.tb-swatch {
	width: 24px;
	height: 24px;
	margin-left: 4px;
	box-sizing: border-box;
	background: #ff00ff;
	border: 1px solid #c0c0c0;
}

.dialog {
	position: absolute;
	left: 98px;
	top: 455px;
	width: 284px;
	height: 322px;
	box-sizing: border-box;
	display: flex;
	flex-direction: column;
	padding: 0 3px 3px;
	background: #0a48d8;
	border-radius: 7px 7px 0 0;
	font-family: "Noto Sans CJK SC", sans-serif;
}

.dialog-title {
	height: 28px;
	flex-shrink: 0;
	margin: 0 -3px;
	padding: 0 4px;
	display: flex;
	align-items: center;
	border-radius: 7px 7px 0 0;
	background: linear-gradient(#0a80f8 0, #0060e8 12%, #0058e4 70%, #0048cc 100%);
}

.dialog-name {
	margin-left: 3px;
	color: #fff;
	font-size: 14px;
	font-weight: 700;
}

.dialog-close {
	margin-left: auto;
	width: 20px;
	height: 19px;
	padding: 0;
	display: flex;
	align-items: center;
	justify-content: center;
	border: 1px solid #fff;
	border-radius: 3px;
	background: linear-gradient(135deg, #f09070, #d04420);
}

.dialog-body {
	flex: 1;
	box-sizing: border-box;
	padding: 13px 11px 0 9px;
	background: #f4f6f2;
	border: 2px solid #c4c8c8;
	border-top-color: #b8c0c8;
	color: #303030;
	font-size: 13px;
}

.colon {
	display: inline-block;
	width: 5px;
	text-align: right;
}

.range {
	display: flex;
	align-items: flex-start;
	height: 42px;
}

.range-fields {
	display: flex;
	flex-direction: column;
	gap: 4px;
}

.range-row {
	display: flex;
	align-items: center;
}

.range-label {
	width: 61px;
	white-space: nowrap;
}

.combo {
	position: relative;
	width: 108px;
	height: 19px;
	box-sizing: border-box;
	padding-left: 2px;
	background: #fff;
	border: 1px solid #888;
	border-radius: 2px;
	color: #000;
	font: 12px/17px "Liberation Sans", sans-serif;
}

.combo-caret {
	position: absolute;
	right: 4px;
	top: 6px;
	width: 0;
	height: 0;
	border-left: 5.5px solid transparent;
	border-right: 5.5px solid transparent;
	border-top: 6px solid #555;
}

.period-card {
	width: 79px;
	height: 42px;
	margin: 2px 0 0 5px;
	display: flex;
	flex-direction: column;
	align-items: center;
	justify-content: center;
	gap: 2px;
	background: #fcfdfb;
	border-radius: 3px;
	line-height: 18px;
}

.rule {
	height: 1px;
	margin-top: 15px;
	background: #d4d6d2;
}

.rule.lower {
	margin-top: 6px;
}

.stats {
	display: grid;
	grid-template-columns: 56px 67px 72px 61px;
	grid-auto-rows: 21px;
	margin-top: 4px;
	align-items: center;
}

.stat-label {
	text-align: right;
	white-space: nowrap;
}

.stat-val {
	text-align: right;
	white-space: nowrap;
	font: 12.5px "Liberation Sans", "Noto Sans CJK SC", sans-serif;
}

.stat-val.dark {
	color: #33424c;
}

.stat-val.up {
	color: #ff0000;
}

.stat-val.down {
	color: #1f7f50;
}

.stat-val.teal {
	color: #1c8cbc;
}

.rank-title {
	margin-top: 2px;
	line-height: 18px;
	font-weight: 700;
}

.rank-btns {
	display: flex;
	gap: 20px;
	margin: 6px 0 0 10px;
}

.rank-btn {
	width: 65px;
	height: 25px;
	padding: 0;
	background: #ece9d8;
	border: none;
	box-shadow:
		inset 1px 1px 0 #fff,
		inset -2px -2px 0 #808080;
	color: #000;
	font: 13px "Noto Sans CJK SC", sans-serif;
}
</style>

<style>
html,
body {
	margin: 0;
	background: #000;
	overflow: hidden;
}
</style>
